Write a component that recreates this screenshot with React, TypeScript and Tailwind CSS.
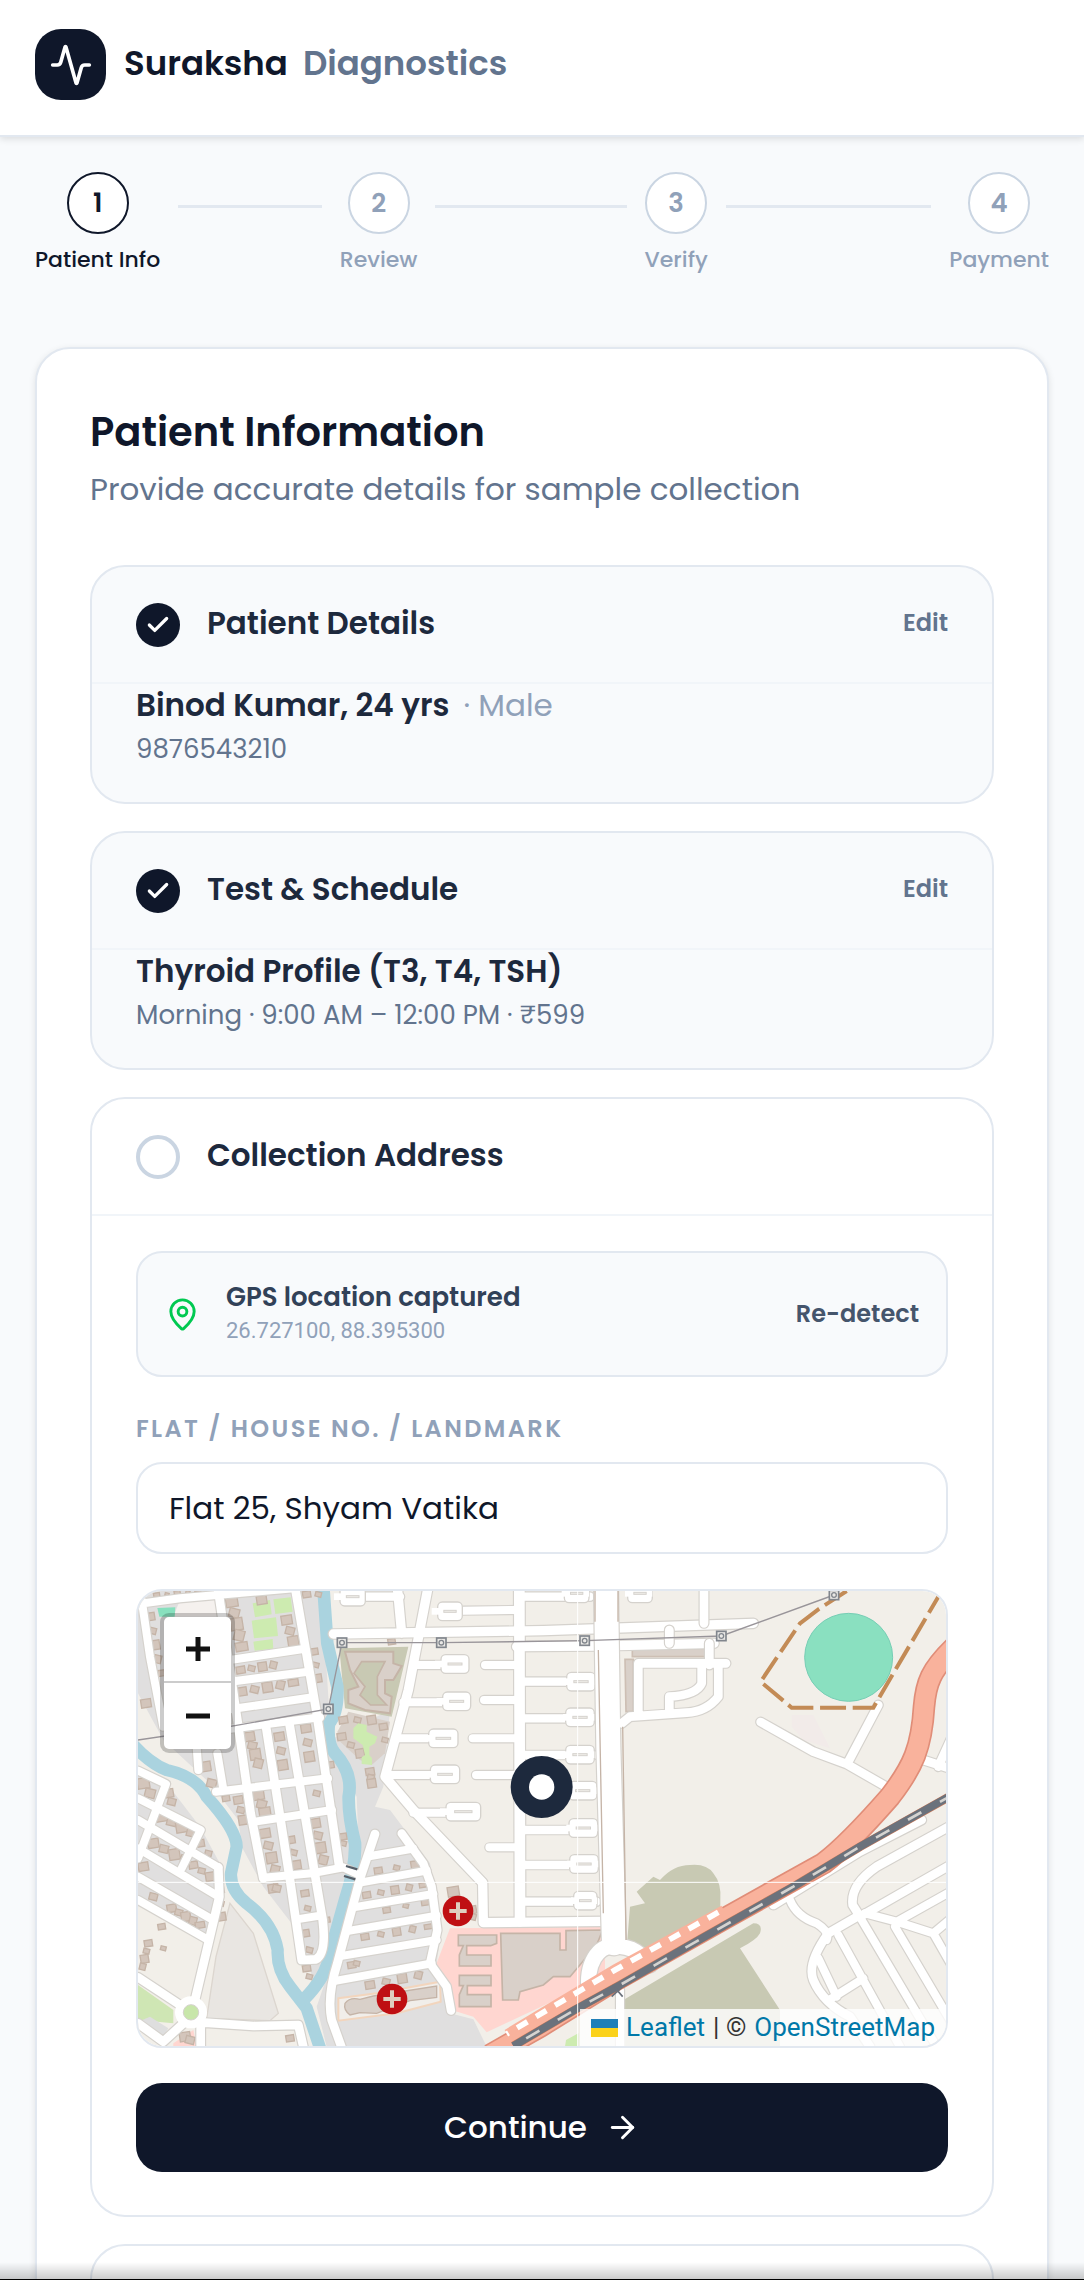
import { Fragment, type ReactNode } from "react";
import { Activity, ArrowRight, Check, MapPin } from "lucide-react";

const steps = ["Patient Info", "Review", "Verify", "Payment"];

function Header() {
  return (
    <header className="relative border-b-2 border-slate-200 bg-white px-[35px] pt-[29px] pb-[35px] shadow-[0_2px_7px_rgba(0,0,0,0.12)]">
      <div className="flex items-center gap-[18px]">
        <div className="flex size-[71px] items-center justify-center rounded-[26px] bg-[#0f172a] text-white">
          <Activity size={44} strokeWidth={2} />
        </div>
        <p className="flex gap-[15px] pb-[4px] text-[34px] leading-[54px] font-semibold text-[#0f172a]">
          Suraksha <span className="text-[#62748e]">Diagnostics</span>
        </p>
      </div>
    </header>
  );
}

function Stepper() {
  return (
    <ol className="flex items-start px-[35px] pt-[35px]">
      {steps.map((label, i) => (
        <li key={label} className={i < 3 ? "flex flex-1 items-start" : "flex items-start"}>
          <div className={i === 0 ? "flex flex-col items-center gap-[9px] text-[#0f172a]" : "flex flex-col items-center gap-[9px] text-[#90a1b9]"}>
            <span
              className={
                i === 0
                  ? "flex size-[62px] items-center justify-center rounded-full border-2 border-[#0f172a] bg-white text-[26px] font-semibold"
                  : "flex size-[62px] items-center justify-center rounded-full border-2 border-[#cad5e2] bg-white text-[26px] font-semibold"
              }
            >
              {i + 1}
            </span>
            <span className="text-[22px] leading-[33px] font-medium whitespace-nowrap">{label}</span>
          </div>
          {i < 3 && <span className="mx-[18px] mt-[33px] h-[3px] flex-1 bg-slate-200" />}
        </li>
      ))}
    </ol>
  );
}

function SectionHeader({ title, done }: { title: string; done?: boolean }) {
  return (
    <div className="flex h-[117px] items-center gap-[27px] border-b-2 border-slate-100 px-[44px]">
      {done ? (
        <span className="flex size-[44px] items-center justify-center rounded-full bg-[#0f172a] text-white">
          <Check size={26} strokeWidth={3} />
        </span>
      ) : (
        <span className="size-[44px] rounded-full border-4 border-[#cad5e2]" />
      )}
      <h2 className="flex-1 pb-[4px] text-[31px] leading-[44px] font-semibold text-[#1d293d]">{title}</h2>
      {done && (
        <button type="button" className="pb-[4px] text-[24px] leading-[36px] font-semibold text-[#62748e]">
          Edit
        </button>
      )}
    </div>
  );
}

function DoneSection({ title, main, aside, detail }: { title: string; main: string; aside?: string; detail: string }) {
  return (
    <section className="rounded-[35px] border-2 border-slate-200 bg-[#f8fafc]">
      <SectionHeader title={title} done />
      <div className="px-[44px] pb-[30px]">
        <p className="flex gap-[14px] text-[31px] leading-[42px] font-semibold text-[#1d293d]">
          {main}
          {aside && <span className="font-normal text-[#90a1b9]">{aside}</span>}
        </p>
        <p className="text-[26px] leading-[46px] text-[#62748e]">{detail}</p>
      </div>
    </section>
  );
}

type Road = [string, number];

const residentialRoads: Road[] = [
  ["M24 72L150 55L500 24M35 60L60 230L100 440", 24],
  ["M265 33L325 440L362 700L400 895", 26],
  ["M497 33L560 400L628 862", 26],
  ["M300 240L520 207M300 305L535 275M300 388L548 352M290 448L570 412", 24],
  ["M408 440L480 900L515 1140L558 1138Q590 1120 578 1020L478 430", 26],
  ["M258 635L594 595M375 725L606 690M400 893L545 880L640 862L692 886M500 1018L575 1006M200 500L205 570M262 520L280 628", 24],
  ["M735 762L692 890L622 1150Q590 1250 605 1320L634 1400", 26],
  ["M815 760L880 850L905 920L922 1050L900 1150L950 1220L963 1292", 25],
  ["M722 828L850 806M690 908L890 872M670 982L910 942M660 1052L920 1007M640 1127L920 1080M620 1202L905 1150", 24],
  ["M892 33L835 330L765 590L850 690L1058 908L1060 1028L1420 1024", 28],
  ["M803 33L815 160M610 162L1240 152L1870 130M1160 200L1400 198L1752 190", 28],
  ["M1168 33L1170 1024", 32],
  ["M24 572L108 612L24 835M24 655L212 750L155 865M24 720L265 862M24 805L258 945M24 890L240 1015M24 960L226 1075", 24],
  ["M265 862L268 950L195 1260M24 1192L150 1275M225 1328L370 1338L505 1335L520 1400M212 1330L212 1400M160 1330L100 1385L24 1330", 26],
  ["M850 255H935M820 367H935M800 475H900M775 585H900M850 698H950M1065 255H1160M1062 360H1160M1028 475H1160M1038 585H1160M1078 802H1160M1000 92L1160 90", 24],
  ["M700 50H810M1170 50L1380 50M1170 305H1390M1170 415H1390M1170 525H1390M1170 632H1390M1170 750H1400M1170 855H1400M1170 965H1400", 25],
];

const bulbs = [
  [668, 50, 76], [960, 94, 74], [975, 252, 84], [980, 364, 84], [940, 475, 88], [945, 583, 88], [1000, 695, 104],
  [1353, 305, 86], [1350, 412, 86], [1350, 524, 86], [1358, 632, 86], [1360, 744, 86], [1362, 852, 86], [1366, 962, 70], [1340, 40, 74], [1530, 40, 74],
];

const easternRoads: Road[] = [
  ["M198 20L205 500L222 1090", 72],
  ["M148 1240C135 1150 175 1095 225 1098C280 1100 300 1120 330 1155", 45],
  ["M492 33V130M388 150V190M508 190V255M558 250H295V400M485 255V310Q470 345 388 350V400M535 255V350Q500 395 440 398L270 410L245 430", 26],
  ["M662 426L820 515L920 552L1035 618M1015 375L925 545M1150 540L1250 572M1195 560L1250 440", 26],
  ["M240 1230V1400", 24],
  ["M1145 720L960 815L700 975M1245 730L1010 860Q930 915 938 975L960 1010L1240 850M960 1005L865 1060Q800 1150 820 1200Q850 1270 930 1310L990 1400", 26],
  ["M750 960Q770 1010 830 1030Q870 1055 860 1080M975 1000L1070 1025L1180 1060L1240 1010M1070 1025L1240 930M1180 1060L1240 1165M895 1065L1080 1400M965 1020L1190 1400M1065 1040L1230 1320M835 1135L890 1250M870 1258L970 1195", 24],
];

type BuildingRow = [number, number, number, number, number, number];

const buildingRows: BuildingRow[] = [
  [80, 45, 235, 35, 6, 18], [60, 110, 90, 280, 5, 28], [305, 65, 335, 200, 5, 36], [470, 120, 490, 185, 3, 32], [395, 60, 400, 62, 1, 30],
  [332, 270, 430, 255, 4, 26], [335, 335, 490, 308, 5, 30], [530, 43, 565, 43, 2, 24], [552, 215, 563, 295, 3, 24], [48, 370, 50, 372, 1, 30],
  [358, 470, 385, 550, 4, 32], [448, 470, 458, 555, 3, 30], [528, 445, 538, 530, 3, 30], [225, 560, 245, 610, 2, 34], [325, 660, 340, 720, 3, 28],
  [385, 645, 405, 700, 3, 34], [530, 605, 560, 640, 2, 26], [288, 655, 290, 656, 1, 22], [405, 760, 435, 870, 4, 32], [482, 780, 500, 855, 3, 26],
  [555, 730, 580, 840, 4, 32], [638, 770, 640, 790, 2, 24], [430, 925, 440, 925, 2, 30], [525, 940, 533, 985, 2, 24], [525, 1060, 538, 1110, 2, 26],
  [40, 610, 60, 640, 2, 36], [115, 640, 125, 665, 2, 30], [95, 710, 185, 755, 4, 34], [70, 790, 165, 840, 4, 32], [210, 790, 235, 820, 2, 26],
  [40, 860, 70, 950, 2, 30], [190, 855, 240, 890, 3, 26], [125, 985, 210, 1035, 5, 28], [270, 930, 275, 1010, 3, 24], [55, 1090, 38, 1160, 4, 24],
  [95, 1040, 100, 1105, 2, 22], [745, 872, 855, 855, 3, 24], [710, 945, 880, 915, 5, 24], [770, 990, 885, 965, 3, 22], [705, 1070, 895, 1040, 5, 24],
  [665, 1155, 680, 1150, 2, 24], [720, 1215, 865, 1185, 4, 28], [530, 1165, 538, 1190, 2, 24], [480, 1375, 485, 1377, 1, 24], [165, 1370, 180, 1380, 2, 32],
  [640, 420, 725, 420, 3, 26], [635, 470, 690, 520, 3, 26], [720, 575, 725, 610, 3, 26], [760, 440, 765, 480, 2, 24], [600, 555, 602, 560, 1, 24],
  [590, 1020, 592, 1022, 1, 20], [785, 185, 786, 186, 1, 22], [970, 935, 972, 940, 1, 34], [1025, 990, 1027, 1010, 2, 28],
];

const pylons = [[595, 387], [636, 188], [934, 188], [1364, 182], [1774, 168], [2112, 45]];

function Roads({ roads }: { roads: Road[] }) {
  return (
    <g fill="none" strokeLinecap="round" strokeLinejoin="round">
      {roads.map(([d, w]) => (
        <path key={d} d={d} stroke="#d5d2cd" strokeWidth={w + 7} />
      ))}
      {roads.map(([d, w]) => (
        <path key={d} d={d} stroke="#fff" strokeWidth={w} />
      ))}
    </g>
  );
}

function MapDrawing() {
  return (
    <svg viewBox="24 33 2424 1365" preserveAspectRatio="xMidYMid slice" className="size-full" role="img" aria-label="Map of the collection address">
      <rect x="0" y="0" width="2600" height="1500" fill="#f2efe9" />
      <g fill="#e0dfdf">
        <path d="M24 33H575L600 430L655 620L660 860L560 1230L500 1050L400 920L335 800L325 720L240 610L100 480L24 340Z" />
        <path d="M600 480L780 390L760 620L735 680L780 690L900 850L935 1040L920 1150L960 1300L1030 1318L1070 1400H590L560 1280L690 900L680 650Z" />
        <path d="M24 560L110 610L210 740L275 860L225 1080L24 955Z" />
      </g>
      <path d="M300 970L370 1060L445 1300L420 1322L230 1315L258 1130Z" fill="#e9e6e2" stroke="#dcd6cf" strokeWidth="4" />
      <path d="M24 1215L130 1290V1330L24 1320Z" fill="#cfe6b4" />
      <path d="M24 1325L60 1310L115 1345L100 1370Z" fill="#dedede" />
      <path d="M130 1390L190 1350L200 1398H130Z" fill="#ffd6d0" />
      <path d="M368 70L420 60L425 103L375 112ZM430 58L482 52L488 95L436 102ZM365 122L438 112L444 168L372 175ZM370 185L428 177L430 206L374 212Z" fill="#cdebb0" />
      <path d="M150 60L262 45L268 110H130Z" fill="#f5f1ee" />
      <path d="M82 84L136 82L134 110H88Z" fill="#88e0be" />
      <path d="M628 205L835 200L785 410L645 385Z" fill="#c8c9b3" />
      <path d="M645 215H790V250L815 258L790 300H765V340L785 350L780 400L705 390L655 370V330L685 320L660 270Z" fill="#d9d0c9" stroke="#c5b4a7" strokeWidth="6" />
      <path d="M695 245H765L742 290V345L770 375H722L690 345L705 320L672 280Z" fill="#c8c9b3" stroke="#c5b4a7" strokeWidth="5" />
      <path d="M622 455L655 395L780 425L765 520L725 555L690 540L625 480Z" fill="#d9d0c9" />
      <path d="M920 1150L960 1045L1425 1040L1425 1190L1070 1357L1030 1310L965 1290Z" fill="#ffd6d0" />
      <g fill="#d9d0c9" stroke="#c5b4a7" strokeWidth="5">
        <path d="M1112 1060H1290V1110H1308V1052L1418 1050L1400 1095L1320 1190H1270L1240 1215L1170 1235L1165 1260H1118Z" />
        <path d="M985 1065H1100V1090L1082 1097H1010V1125H1083V1158H988V1125L1000 1097H985ZM988 1186H1083V1217H1012V1244H1083V1280H988V1244L1000 1217H988Z" />
      </g>
      <path d="M625 1255L740 1240L930 1205L932 1265L800 1300L625 1322Z" fill="#f1eeea" stroke="#f2d5bd" strokeWidth="6" />
      <path d="M645 1270Q660 1250 690 1258L730 1248L920 1218V1252L840 1262L740 1300L690 1298L660 1305Q640 1290 645 1270Z" fill="#d9d0c9" stroke="#c5b4a7" strokeWidth="4" />
      <g transform="translate(1230)" fill="#c8c9b3">
        <path d="M290 935L340 890L360 900Q400 855 450 855Q500 850 520 880Q545 910 541 960V985L330 1110L262 1080L270 980L315 970Z" />
        <path d="M250 1260L640 1030Q670 1030 660 1060Q650 1080 600 1105L720 1290V1400H250Z" />
        <path d="M78 1380L115 1360V1400H75Z" fill="#cdebb0" />
        <path d="M277 205H495V230H277ZM255 238H280V395H258Z" fill="#d9d0c9" stroke="#cdbfb4" strokeWidth="5" />
        <path d="M755 405H820L870 505L790 480L755 440Z" fill="#f2ebe9" />
      </g>
      <g fill="none" stroke="#aad3df" strokeLinecap="round" strokeLinejoin="round">
        <path d="M10 495Q60 550 110 570Q200 590 230 650Q320 750 320 800L303 880Q300 930 350 970Q430 1030 443 1110Q440 1170 480 1220L530 1285L572 1410" strokeWidth="37" />
        <path d="M580 20L592 190L622 320Q625 400 597 430Q590 490 615 520Q670 580 656 650Q655 710 675 790Q678 860 645 960L600 1120Q590 1190 520 1260" strokeWidth="38" />
      </g>
      {buildingRows.map(([x1, y1, x2, y2, n, s]) => (
        <g key={`${x1}-${y1}`} fill="#d3c5bb" stroke="#c5b4a7" strokeWidth="4">
          {Array.from({ length: n }, (_, i) => {
            const t = n > 1 ? i / (n - 1) : 0;
            const w = s - (i % 2) * 6;
            const h = s - ((i + 1) % 3) * 5;
            const x = x1 + (x2 - x1) * t;
            const y = y1 + (y2 - y1) * t;
            return <rect key={i} x={x - w / 2} y={y - h / 2} width={w} height={h} transform={`rotate(${i % 2 ? 14 : -9} ${x} ${y})`} />;
          })}
        </g>
      ))}
      <path d="M670 445L685 430L710 435V455L742 470L735 490L718 500V525L726 535V555L695 552V532L705 525L698 495L670 475Z" fill="#cdebb0" />
      <Roads roads={residentialRoads} />
      {bulbs.map(([x, y, w]) => (
        <Fragment key={`${x}-${y}`}>
          <rect x={x - w / 2} y={y - 28} width={w} height="56" rx="14" fill="#fff" stroke="#d5d2cd" strokeWidth="4" />
          <rect x={x < 1100 ? x - w / 2 - 18 : x - w / 2 - 8} y={y - 10} width={w + 8} height="20" fill="#fff" />
          <rect x={x - w / 4} y={y - 3} width={w / 2} height="6" fill="#efece7" stroke="#d5d2cd" strokeWidth="3" />
        </Fragment>
      ))}
      <circle cx="183" cy="1297" r="48" fill="#fff" />
      <circle cx="183" cy="1297" r="23" fill="#c8e6aa" stroke="#d5d2cd" strokeWidth="3" />
      <path d="M648 858L682 868M642 888L676 898" stroke="#555e68" strokeWidth="7" />
      <g transform="translate(1230)">
        <Roads roads={easternRoads} />
        <path d="M165 33V125M234 33V125M175 210L190 1000M248 440L258 1080" stroke="#c5b4a7" strokeWidth="4" fill="none" />
        <g fill="none">
          <path d="M1250 195C1170 270 1158 310 1152 380C1145 500 1120 560 1050 650C980 730 910 805 850 850L560 1012L230 1198L0 1340L-150 1425" stroke="#e08d78" strokeWidth="68" />
          <path d="M1250 195C1170 270 1158 310 1152 380C1145 500 1120 560 1050 650C980 730 910 805 850 850L560 1012L230 1198L0 1340L-150 1425" stroke="#f9b29c" strokeWidth="58" />
          <path d="M550 988L225 1165L-100 1360" stroke="#f9b29c" strokeWidth="24" />
          <path d="M535 997L225 1170L-100 1362" stroke="#fff" strokeWidth="17" strokeDasharray="36 30" />
          <path d="M1240 643L960 800L760 920L480 1078L240 1215L100 1292L-80 1398" stroke="#c5795b" strokeWidth="26" />
          <path d="M1240 643L960 800L760 920L480 1078L240 1215L100 1292L-80 1398" stroke="#6b727c" strokeWidth="23" />
          <path d="M1240 643L960 800L760 920L480 1078L240 1215L100 1292L-80 1398" stroke="#d5d3d0" strokeWidth="8" strokeDasharray="46 64" />
          <path d="M218 1215L248 1250M250 1218L215 1250" stroke="#6b727c" strokeWidth="5" />
          <path d="M920 33L835 88L780 130L662 305L755 383H1000L1060 280L1195 50" stroke="#c38b56" strokeWidth="12" strokeDasharray="78 20" />
        </g>
        <circle cx="926" cy="232" r="132" fill="#8ae0c0" stroke="#76cdb4" strokeWidth="3" />
      </g>
      <path d="M24 480L315 437L595 387L636 188H934L1364 182L1774 168L2112 45" fill="none" stroke="#99959a" strokeWidth="4" />
      {pylons.map(([x, y]) => (
        <g key={x} stroke="#81868d" strokeWidth="5">
          <rect x={x - 14} y={y - 14} width="28" height="28" fill="#e9e8e5" />
          <circle cx={x} cy={y} r="7" fill="none" strokeWidth="4" />
        </g>
      ))}
      {[[984, 993], [786, 1257]].map(([x, y]) => (
        <g key={x}>
          <circle cx={x} cy={y} r="46" fill="#bf0f13" />
          <path d={`M${x - 26} ${y}h52M${x} ${y - 26}v52`} stroke="#dfcfbf" strokeWidth="12" />
        </g>
      ))}
      <path d="M24 907H2448M1343 33V1398" stroke="#fff" strokeWidth="3" />
      <circle cx="1235" cy="621" r="93" fill="#1d293d" />
      <circle cx="1235" cy="621" r="38" fill="#fff" />
    </svg>
  );
}

function AddressMap() {
  return (
    <div className="relative mt-[35px] h-[459px] overflow-hidden rounded-[26px] border-2 border-slate-200">
      <MapDrawing />
      <div className="absolute top-[22px] left-[22px] flex w-[75px] flex-col divide-y-2 divide-[#ccc] overflow-hidden rounded-[9px] border-4 border-black/20 bg-white bg-clip-padding">
        <button type="button" aria-label="Zoom in" className="flex h-[66px] items-center justify-center">
          <svg width="24" height="24" viewBox="0 0 24 24"><path d="M0 12H24M12 0V24" stroke="#111" strokeWidth="5" /></svg>
        </button>
        <button type="button" aria-label="Zoom out" className="flex h-[66px] items-center justify-center">
          <svg width="24" height="24" viewBox="0 0 24 24"><path d="M0 12H24" stroke="#111" strokeWidth="5" /></svg>
        </button>
      </div>
      <div className="absolute right-0 bottom-0 flex h-[37px] items-center gap-[8px] bg-white/80 px-[11px] font-['Roboto',sans-serif] text-[26px] text-[#333]">
        <a href="#leaflet" className="flex items-center gap-[8px] text-[#0078a8]">
          <svg width="27" height="18" viewBox="0 0 27 18"><path fill="#1f7fb8" d="M0 0h27v9H0z" /><path fill="#fbd21b" d="M0 9h27v9H0z" /></svg>
          Leaflet
        </a>
        <span>| ©</span>
        <a href="#osm" className="text-[#0078a8]">OpenStreetMap</a>
      </div>
    </div>
  );
}

function Section({ children }: { children?: ReactNode }) {
  return <section className="rounded-[35px] border-2 border-slate-200 bg-white">{children}</section>;
}

export default function App() {
  return (
    <div className="relative h-screen overflow-hidden bg-[#f8fafc] font-['Poppins','Inter',sans-serif]">
      <Header />
      <Stepper />
      <main className="px-[35px] pt-[71px]">
        <div className="rounded-[35px] border-2 border-slate-200 bg-white p-[53px] shadow-[0_2px_7px_rgba(0,0,0,0.1)]">
          <h1 className="text-[40px] leading-[60px] font-semibold text-[#0f172a]">Patient Information</h1>
          <p className="mt-[4px] text-[31px] leading-[47px] text-[#62748e]">Provide accurate details for sample collection</p>
          <div className="mt-[52px] flex flex-col gap-[27px]">
            <DoneSection title="Patient Details" main="Binod Kumar, 24 yrs" aside="· Male" detail="9876543210" />
            <DoneSection title="Test & Schedule" main="Thyroid Profile (T3, T4, TSH)" detail="Morning · 9:00 AM – 12:00 PM · ₹599" />
            <Section>
              <SectionHeader title="Collection Address" />
              <form className="flex flex-col px-[44px] pt-[35px] pb-[43px]" onSubmit={(e) => e.preventDefault()}>
                <div className="flex items-center gap-[26px] rounded-[26px] border-2 border-slate-200 bg-[#f8fafc] px-[27px] py-[25px]">
                  <MapPin size={35} strokeWidth={2} className="text-[#00c951]" />
                  <div className="flex-1 pb-[4px]">
                    <p className="text-[26px] leading-[38px] font-semibold text-[#314158]">GPS location captured</p>
                    <p className="font-['Roboto',sans-serif] text-[22px] leading-[30px] text-[#90a1b9]">26.727100, 88.395300</p>
                  </div>
                  <button type="button" className="text-[24px] leading-[36px] font-semibold text-[#45556c]">Re-detect</button>
                </div>
                <label htmlFor="flat" className="mt-[34px] text-[24px] leading-[36px] font-semibold tracking-widest text-[#90a1b9]">
                  FLAT / HOUSE NO. / LANDMARK
                </label>
                <input
                  id="flat"
                  defaultValue="Flat 25, Shyam Vatika"
                  className="mt-[15px] h-[92px] w-full rounded-[26px] border-2 border-slate-200 bg-white px-[31px] text-[31px] text-[#0f172a] outline-none"
                />
                <AddressMap />
                <button type="submit" className="mt-[35px] flex h-[89px] items-center justify-center gap-[18px] rounded-[26px] bg-[#0f172a] text-[31px] font-medium text-white">
                  Continue
                  <ArrowRight size={35} strokeWidth={2} />
                </button>
              </form>
            </Section>
            <Section>
              <div className="h-[117px]" />
            </Section>
          </div>
        </div>
      </main>
      <div className="absolute inset-x-0 bottom-0 h-[18px] border-b border-black bg-linear-to-b from-transparent to-black/20" />
    </div>
  );
}
